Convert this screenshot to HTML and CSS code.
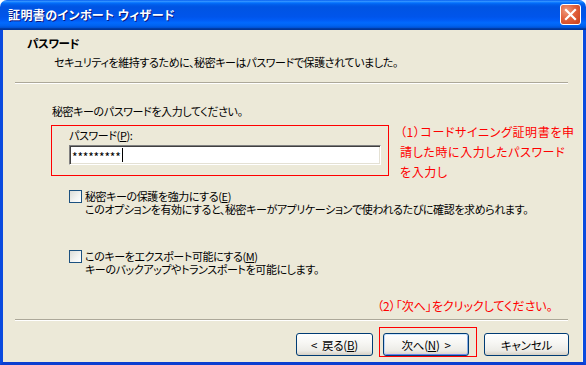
FILE: index.html
```html
<!DOCTYPE html>
<html lang="ja">
<head>
<meta charset="utf-8">
<link rel="stylesheet" href="styles.css">
</head>
<body>
<div class="window">
  <div class="titlebar">
    <span class="title">証明書のインポート ウィザード</span>
    <div class="close">
      <svg width="21" height="21" viewBox="0 0 21 21"><path d="M6 6 L15 15 M15 6 L6 15" stroke="#fff" stroke-width="2.2" stroke-linecap="square"/></svg>
    </div>
  </div>
  <div class="frame">
    <div class="header">
      <div class="h-title">パスワード</div>
      <div class="h-sub">セキュリティを維持するために、秘密キーはパスワードで保護されていました。</div>
    </div>
    <div class="sep"></div>
    <p class="intro">秘密キーのパスワードを入力してください。</p>
    <div class="pw-row">
      <div class="pw-box">
        <div class="pw-label">パスワード(<u>P</u>):</div>
        <div class="input"><span class="stars">*********</span><span class="caret"></span></div>
      </div>
      <div class="note">（1）コードサイニング証明書を申<br>請した時に入力したパスワード<br>を入力し</div>
    </div>
    <div class="check first">
      <span class="box"></span>
      <div class="check-text">
        <div>秘密キーの保護を強力にする(<u>E</u>)</div>
        <div>このオプションを有効にすると、秘密キーがアプリケーションで使われるたびに確認を求められます。</div>
      </div>
    </div>
    <div class="check second">
      <span class="box"></span>
      <div class="check-text">
        <div>このキーをエクスポート可能にする(<u>M</u>)</div>
        <div>キーのバックアップやトランスポートを可能にします。</div>
      </div>
    </div>
    <div class="note2">（2）「次へ」をクリックしてください。</div>
    <div class="sep bottom"></div>
    <div class="buttons">
      <button class="btn back">&lt;&nbsp; 戻る(<u>B</u>)</button>
      <span class="next-wrap"><button class="btn next">次へ(<u>N</u>)&nbsp; &gt;</button></span>
      <button class="btn cancel">キャンセル</button>
    </div>
  </div>
</div>
</body>
</html>
```
FILE: styles.css
```css
html, body {
  margin: 0;
  padding: 0;
  background: #ffffff;
}
body {
  font-family: "Noto Sans CJK JP", sans-serif;
  font-feature-settings: "palt";
  font-size: 11px;
  letter-spacing: -0.4px;
  color: #000;
}
.window {
  width: 586px;
  height: 365px;
  display: flex;
  flex-direction: column;
  overflow: hidden;
  border-radius: 7px 7px 0 0;
}
.titlebar {
  height: 30px;
  flex: none;
  display: flex;
  align-items: center;
  justify-content: space-between;
  padding: 0 5px 0 8px;
  background: linear-gradient(to bottom, #0058EE 0%, #3593FF 4%, #288EFF 6%, #127DFF 8%, #036FFC 10%, #0262EE 14%, #0057E5 20%, #0054E3 24%, #0055EB 56%, #005BF5 66%, #026AFE 76%, #0062EF 86%, #0052D6 92%, #0040AB 94%, #003092 100%);
}
.title {
  color: #fff;
  font-weight: bold;
  font-size: 12px;
  line-height: 14px;
  text-shadow: 1px 1px 0 #0A1883;
  letter-spacing: 0.4px;
}
.close {
  width: 21px;
  height: 21px;
  box-sizing: border-box;
  border: 1px solid #fff;
  border-radius: 3px;
  background: radial-gradient(circle at 30% 30%, #EE9A7E 0%, #E2613C 45%, #C83E1A 100%);
  margin-top: -1px;
  position: relative;
}
.close svg {
  position: absolute;
  left: -1px;
  top: -1px;
}
.frame {
  flex: 1;
  min-height: 0;
  background: #ECE9D8;
  border-left: 3px solid #0A4ADF;
  border-right: 3px solid #0A4ADF;
  border-bottom: 3px solid #0A3ED0;
  box-shadow: inset -1px 0 0 #F4F2E8;
  display: flex;
  flex-direction: column;
  line-height: 14px;
  white-space: nowrap;
}
.header {
  padding: 6px 0 0 24px;
}
.h-title {
  font-weight: bold;
  font-size: 11.5px;
  height: 14px;
}
.h-sub {
  margin: 5px 0 0 27px;
  height: 14px;
}
.sep {
  flex: none;
  margin: 13px 15px 0 12px;
  height: 0;
  border-top: 1px solid #ACA899;
  border-bottom: 1px solid #FFFFFF;
}
.intro {
  margin: 20px 0 0 49px;
  height: 14px;
}
.pw-row {
  display: flex;
  align-items: flex-start;
  height: 51px;
  margin: 7px 0 0 48px;
}
.pw-box {
  width: 338px;
  box-sizing: border-box;
  border: 1px solid #FF0000;
  padding: 2px 0 10px 17px;
}
.pw-label {
  height: 14px;
}
.input {
  margin-top: 3px;
  width: 312px;
  height: 20px;
  box-sizing: border-box;
  background: #fff;
  border-top: 1px solid #808080;
  border-left: 1px solid #808080;
  border-right: 1px solid #fff;
  border-bottom: 1px solid #fff;
  box-shadow: inset 1px 1px 0 #404040, inset -1px -1px 0 #E4E1D4;
  display: flex;
  align-items: center;
  padding-left: 2px;
}
.stars {
  font-size: 12px;
  line-height: 14px;
  margin-top: 3px;
  letter-spacing: -0.2px;
}
.caret {
  width: 1px;
  height: 14px;
  background: #000;
  margin-left: 1px;
}
.note {
  color: #FF0000;
  line-height: 20px;
  margin: -3px 0 0 11px;
  font-size: 12px;
  letter-spacing: 0.6px;
}
.check {
  display: flex;
  align-items: flex-start;
  margin-left: 66px;
  line-height: 13px;
}
.check.first {
  margin-top: 14px;
}
.check.second {
  margin-top: 34px;
}
.box {
  width: 13px;
  height: 13px;
  box-sizing: border-box;
  border: 1px solid #1C5180;
  background: linear-gradient(135deg, #DCDCD7 0%, #F4F4F2 60%, #FFFFFF 100%);
  flex: none;
}
.check-text {
  margin-left: 3px;
}
.note2 {
  color: #FF0000;
  font-size: 12px;
  letter-spacing: 0;
  margin: 23px 0 0 374px;
  height: 14px;
}
.sep.bottom {
  margin-top: 6px;
}
.buttons {
  display: flex;
  align-items: flex-start;
  margin: 12px 0 0 293px;
}
.btn {
  font-family: "Noto Sans CJK JP", sans-serif;
  font-feature-settings: "palt";
  font-size: 11.5px;
  letter-spacing: -0.2px;
  line-height: 14px;
  color: #000;
  height: 23px;
  padding: 0;
  border: 1px solid #003C74;
  border-radius: 3px;
  background: linear-gradient(to bottom, #FFFFFF 0%, #F7F7F4 40%, #ECEBE6 80%, #D6D0C5 100%);
  display: flex;
  align-items: center;
  justify-content: center;
}
.back {
  width: 77px;
}
.next-wrap {
  position: relative;
  margin-left: 10px;
}
.next-wrap::after {
  content: "";
  position: absolute;
  left: -4px;
  top: -6px;
  width: 96px;
  height: 28px;
  border: 1px solid #FF0000;
  pointer-events: none;
}
.next {
  width: 86px;
  box-shadow: inset 0 1px 0 #CEE7FF, inset 1px 0 0 #BCD4F6, inset -1px 0 0 #89ADE4, inset 0 -1px 0 #6982EE;
}
.cancel {
  width: 85px;
  margin-left: 15px;
}
u {
  text-decoration: underline;
  text-underline-offset: 1px;
}
```
